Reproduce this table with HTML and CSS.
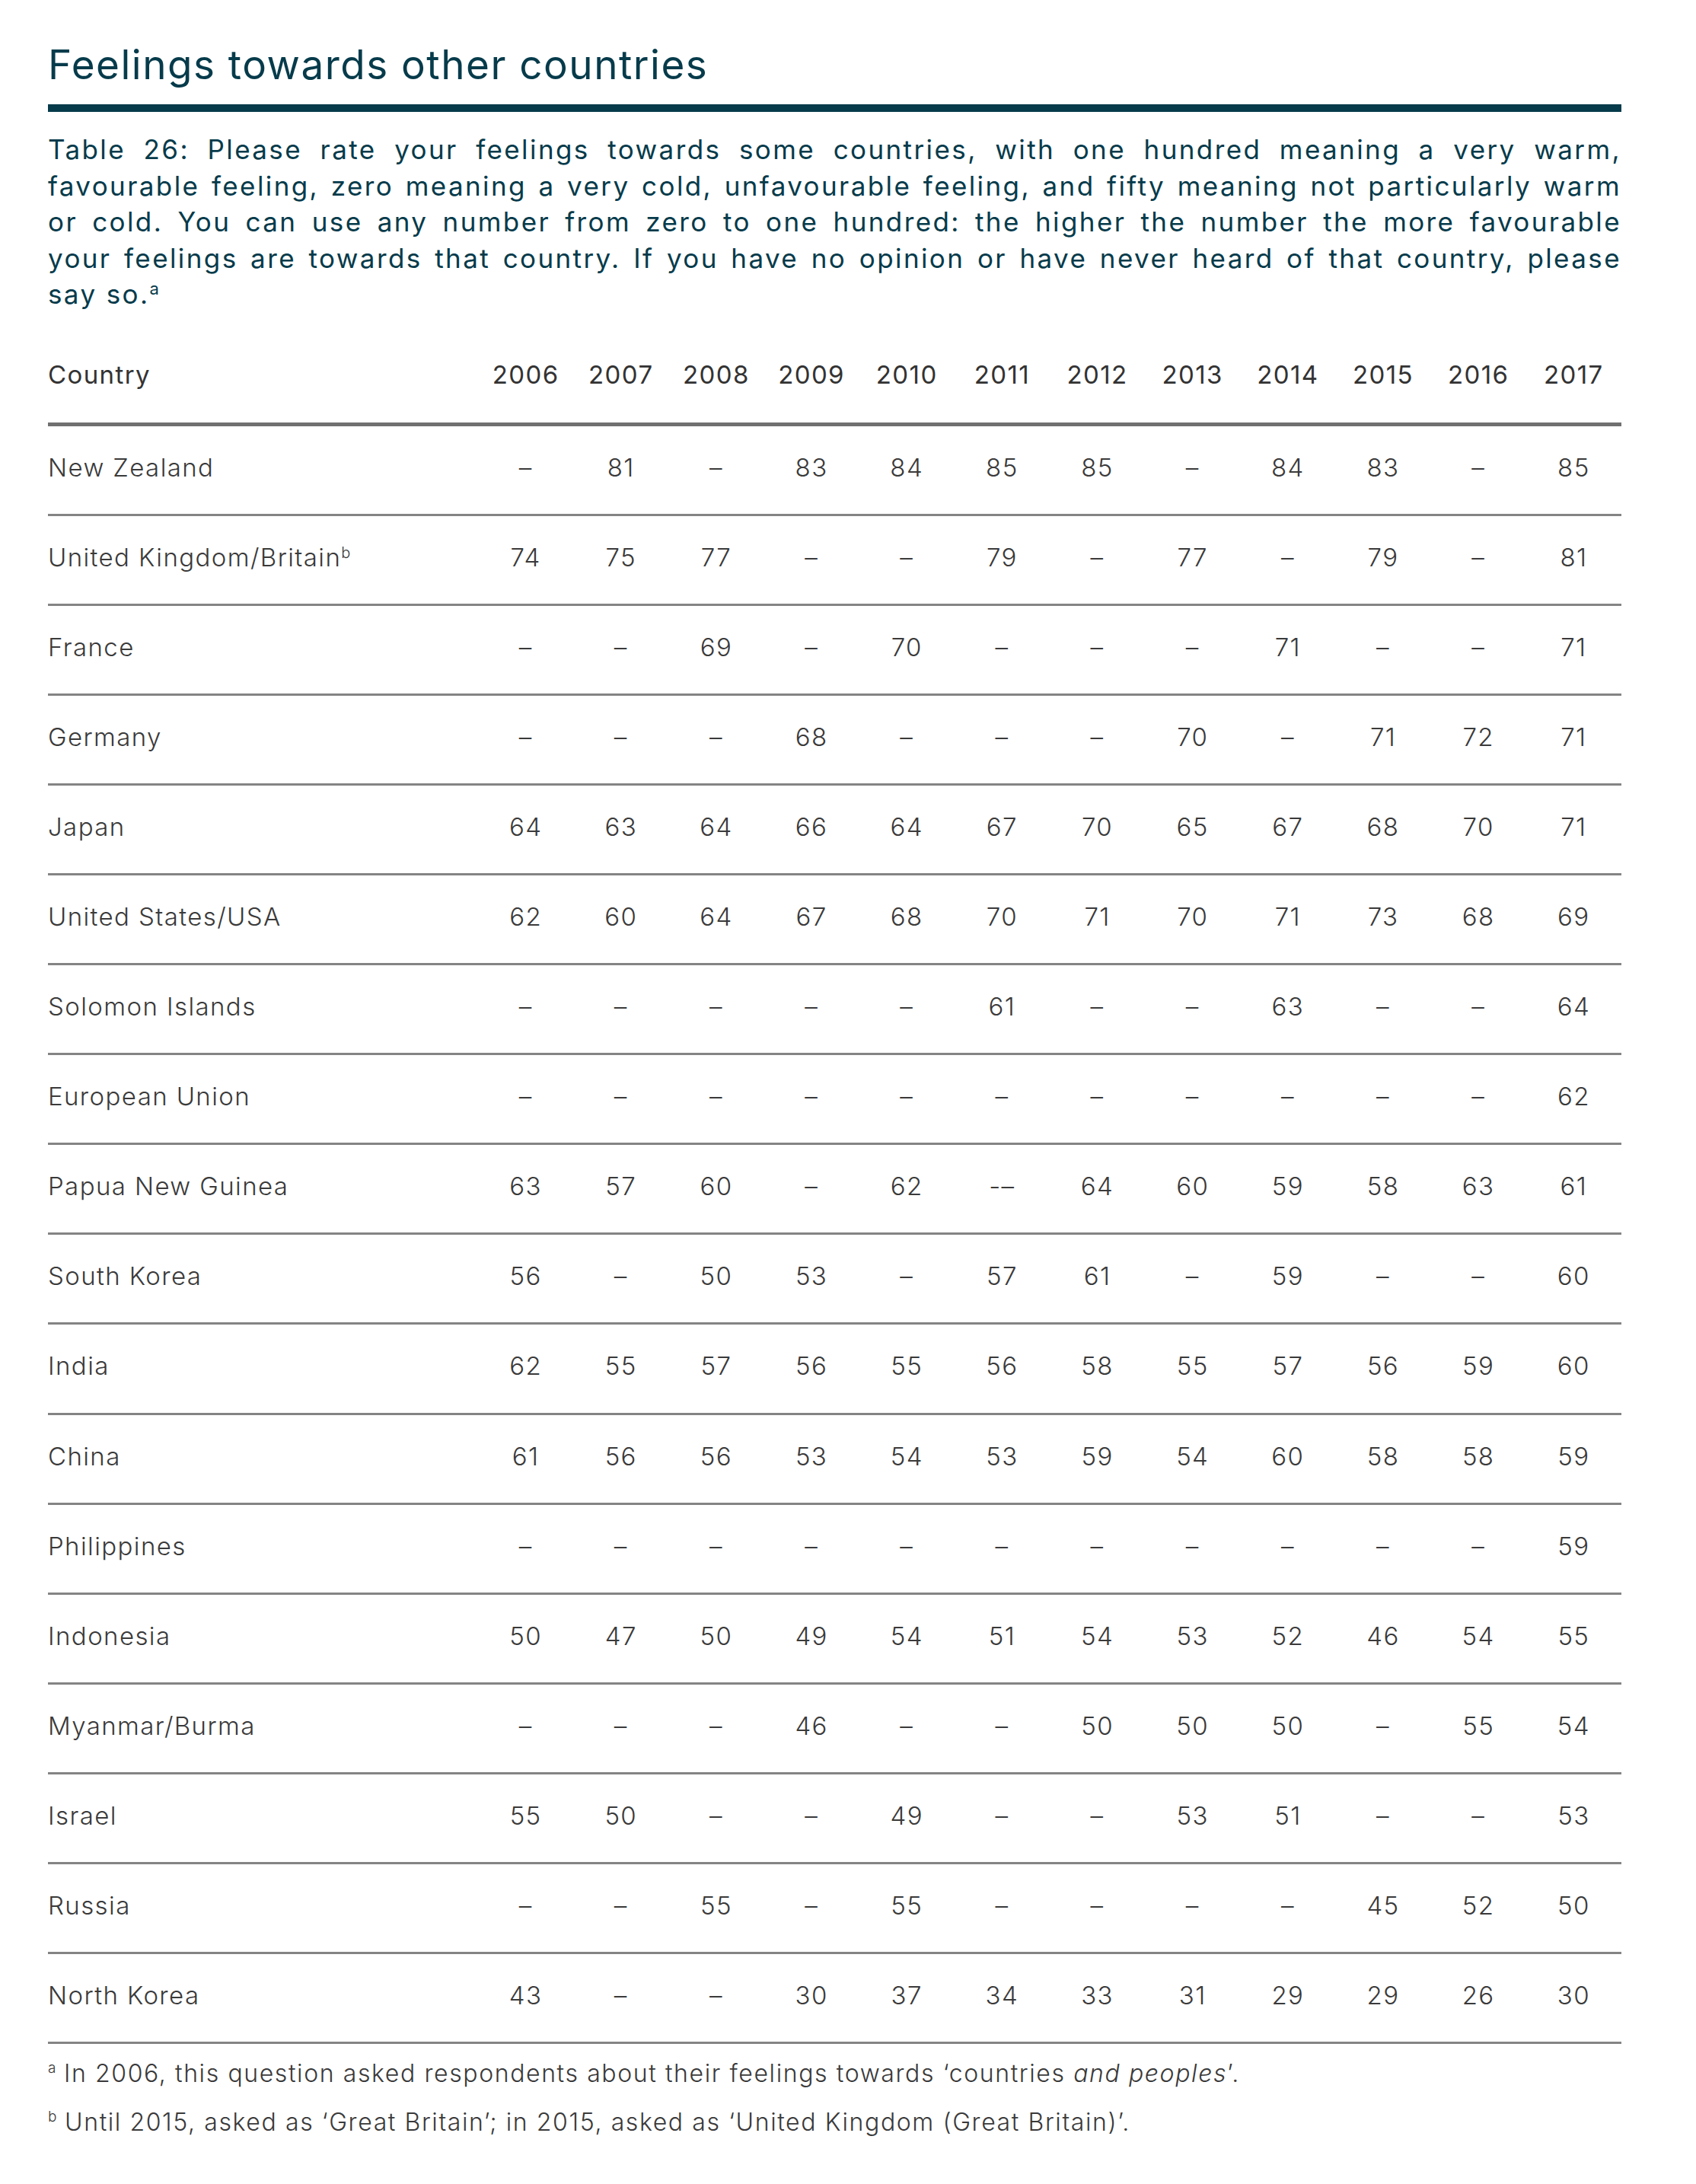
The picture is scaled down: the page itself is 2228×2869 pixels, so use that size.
FILE: index.html
```html
<!DOCTYPE html>
<html lang="en">
<head>
<meta charset="utf-8">
<title>Feelings towards other countries</title>
<link rel="stylesheet" href="styles.css">
</head>
<body>
<main class="page">
  <h1 class="title">Feelings towards other countries</h1>
  <div class="rule"></div>
  <p class="lead">
    <span class="ln">Table 26: Please rate your feelings towards some countries, with one hundred meaning a very warm,</span>
    <span class="ln">favourable feeling, zero meaning a very cold, unfavourable feeling, and fifty meaning not particularly warm</span>
    <span class="ln">or cold. You can use any number from zero to one hundred: the higher the number the more favourable</span>
    <span class="ln">your feelings are towards that country. If you have no opinion or have never heard of that country, please</span>
    <span class="ln last">say so.<sup class="sup">a</sup></span>
  </p>
  <table class="data">
    <colgroup>
      <col class="c-name">
      <col class="c-yr"><col class="c-yr"><col class="c-yr"><col class="c-yr"><col class="c-yr"><col class="c-yr">
      <col class="c-yr"><col class="c-yr"><col class="c-yr"><col class="c-yr"><col class="c-yr"><col class="c-yr">
    </colgroup>
    <thead>
      <tr><th class="name">Country</th><th>2006</th><th>2007</th><th>2008</th><th>2009</th><th>2010</th><th>2011</th><th>2012</th><th>2013</th><th>2014</th><th>2015</th><th>2016</th><th>2017</th></tr>
    </thead>
    <tbody>
      <tr><td class="name">New Zealand</td><td>–</td><td>81</td><td>–</td><td>83</td><td>84</td><td>85</td><td>85</td><td>–</td><td>84</td><td>83</td><td>–</td><td>85</td></tr>
      <tr><td class="name">United Kingdom/Britain<sup class="sup-s">b</sup></td><td>74</td><td>75</td><td>77</td><td>–</td><td>–</td><td>79</td><td>–</td><td>77</td><td>–</td><td>79</td><td>–</td><td>81</td></tr>
      <tr><td class="name">France</td><td>–</td><td>–</td><td>69</td><td>–</td><td>70</td><td>–</td><td>–</td><td>–</td><td>71</td><td>–</td><td>–</td><td>71</td></tr>
      <tr><td class="name">Germany</td><td>–</td><td>–</td><td>–</td><td>68</td><td>–</td><td>–</td><td>–</td><td>70</td><td>–</td><td>71</td><td>72</td><td>71</td></tr>
      <tr><td class="name">Japan</td><td>64</td><td>63</td><td>64</td><td>66</td><td>64</td><td>67</td><td>70</td><td>65</td><td>67</td><td>68</td><td>70</td><td>71</td></tr>
      <tr><td class="name">United States/USA</td><td>62</td><td>60</td><td>64</td><td>67</td><td>68</td><td>70</td><td>71</td><td>70</td><td>71</td><td>73</td><td>68</td><td>69</td></tr>
      <tr><td class="name">Solomon Islands</td><td>–</td><td>–</td><td>–</td><td>–</td><td>–</td><td>61</td><td>–</td><td>–</td><td>63</td><td>–</td><td>–</td><td>64</td></tr>
      <tr><td class="name">European Union</td><td>–</td><td>–</td><td>–</td><td>–</td><td>–</td><td>–</td><td>–</td><td>–</td><td>–</td><td>–</td><td>–</td><td>62</td></tr>
      <tr><td class="name">Papua New Guinea</td><td>63</td><td>57</td><td>60</td><td>–</td><td>62</td><td>-–</td><td>64</td><td>60</td><td>59</td><td>58</td><td>63</td><td>61</td></tr>
      <tr><td class="name">South Korea</td><td>56</td><td>–</td><td>50</td><td>53</td><td>–</td><td>57</td><td>61</td><td>–</td><td>59</td><td>–</td><td>–</td><td>60</td></tr>
      <tr><td class="name">India</td><td>62</td><td>55</td><td>57</td><td>56</td><td>55</td><td>56</td><td>58</td><td>55</td><td>57</td><td>56</td><td>59</td><td>60</td></tr>
      <tr><td class="name">China</td><td>61</td><td>56</td><td>56</td><td>53</td><td>54</td><td>53</td><td>59</td><td>54</td><td>60</td><td>58</td><td>58</td><td>59</td></tr>
      <tr><td class="name">Philippines</td><td>–</td><td>–</td><td>–</td><td>–</td><td>–</td><td>–</td><td>–</td><td>–</td><td>–</td><td>–</td><td>–</td><td>59</td></tr>
      <tr><td class="name">Indonesia</td><td>50</td><td>47</td><td>50</td><td>49</td><td>54</td><td>51</td><td>54</td><td>53</td><td>52</td><td>46</td><td>54</td><td>55</td></tr>
      <tr><td class="name">Myanmar/Burma</td><td>–</td><td>–</td><td>–</td><td>46</td><td>–</td><td>–</td><td>50</td><td>50</td><td>50</td><td>–</td><td>55</td><td>54</td></tr>
      <tr><td class="name">Israel</td><td>55</td><td>50</td><td>–</td><td>–</td><td>49</td><td>–</td><td>–</td><td>53</td><td>51</td><td>–</td><td>–</td><td>53</td></tr>
      <tr><td class="name">Russia</td><td>–</td><td>–</td><td>55</td><td>–</td><td>55</td><td>–</td><td>–</td><td>–</td><td>–</td><td>45</td><td>52</td><td>50</td></tr>
      <tr><td class="name">North Korea</td><td>43</td><td>–</td><td>–</td><td>30</td><td>37</td><td>34</td><td>33</td><td>31</td><td>29</td><td>29</td><td>26</td><td>30</td></tr>
    </tbody>
  </table>
  <div class="notes">
    <p class="note"><sup class="fn">a</sup> In 2006, this question asked respondents about their feelings towards ‘countries <em>and peoples</em>’.</p>
    <p class="note"><sup class="fn">b</sup> Until 2015, asked as ‘Great Britain’; in 2015, asked as ‘United Kingdom (Great Britain)’.</p>
  </div>
</main>
</body>
</html>
```
FILE: styles.css
```css
html, body {
  margin: 0;
  padding: 0;
  background: #ffffff;
}

.page {
  width: 2067px;
  padding: 0 0 60px 63px;
  font-family: Inter, "Open Sans", "Liberation Sans", sans-serif;
}

.title {
  margin: 53px 0 0 0;
  font-size: 53px;
  line-height: 64px;
  font-weight: 400;
  color: #063b4b;
  letter-spacing: 1.5px;
}

.rule {
  height: 10px;
  margin-top: 20px;
  background: #063b4b;
}

.lead {
  margin: 26px 0 0 0;
  font-size: 35px;
  line-height: 47.5px;
  font-weight: 400;
  color: #063b4b;
  letter-spacing: 2.4px;
}

.ln {
  display: block;
  text-align: justify;
  text-align-last: justify;
  white-space: nowrap;
}

.ln.last {
  text-align-last: left;
}

.sup {
  font-size: 22px;
  vertical-align: 12px;
  line-height: 0;
  font-weight: 400;
  letter-spacing: 0;
}

.data {
  margin-top: 26px;
  width: 2067px;
  border-collapse: collapse;
  table-layout: fixed;
  color: #3a3a3a;
}

.c-name { width: 565px; }
.c-yr { width: 125.16px; }

.data th,
.data td {
  padding: 0 0 7px 0;
  text-align: center;
  font-size: 33px;
  line-height: 40px;
  letter-spacing: 1.4px;
  white-space: nowrap;
}

.data th {
  height: 111px;
  font-weight: 400;
  color: #333333;
  border-bottom: 5px solid #707070;
}

.data td {
  height: 108.1px;
  font-weight: 300;
  border-bottom: 3px solid #848484;
}

.data .name {
  text-align: left;
}

.sup-s {
  font-size: 20px;
  vertical-align: 11px;
  line-height: 0;
  letter-spacing: 0;
}

.notes {
  margin-top: 7px;
}

.note {
  margin: 0;
  font-size: 32px;
  line-height: 64px;
  font-weight: 300;
  color: #3a3a3a;
  letter-spacing: 1.6px;
}

.note em {
  font-style: italic;
}

.fn {
  font-size: 19px;
  vertical-align: 12px;
  line-height: 0;
  letter-spacing: 0;
}
```
